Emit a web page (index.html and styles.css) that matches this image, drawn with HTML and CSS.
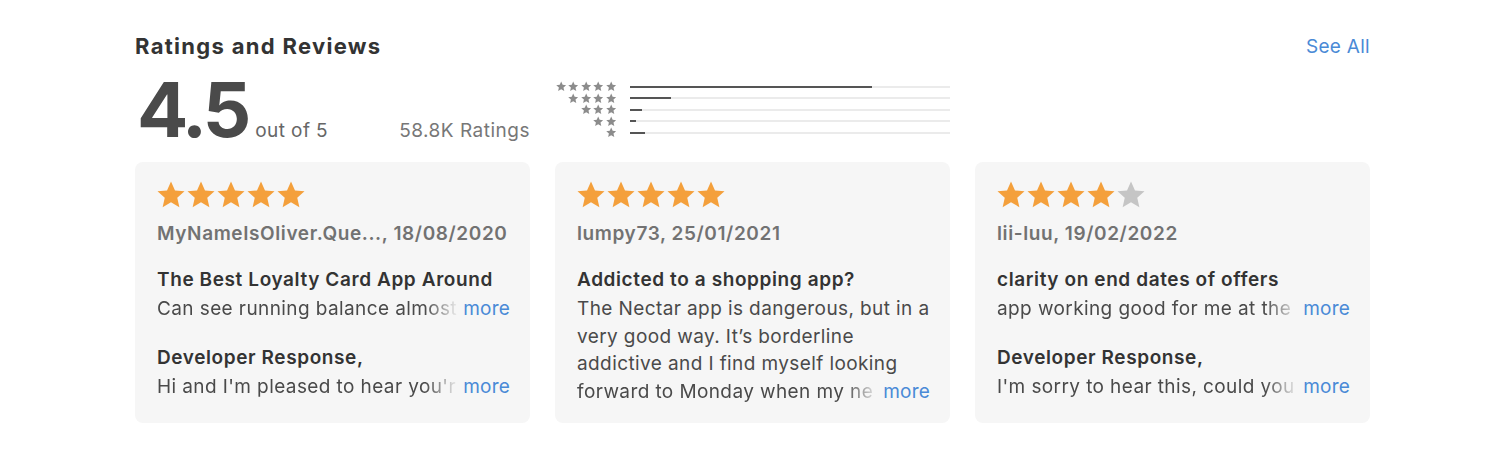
FILE: index.html
```html
<!DOCTYPE html>
<html lang="en">

<head>
    <meta charset="UTF-8">
    <meta name="viewport" content="width=device-width, initial-scale=1.0">
    <title>Ratings and Reviews</title>
    <link rel="stylesheet" href="styles.css">
</head>

<body>
    <svg width="0" height="0" class="defs">
        <symbol id="star" viewBox="0 0 24 24">
            <path d="M12 1.2l3.2 7.1 7.6.7-5.8 5.1 1.7 7.6L12 17.8l-6.7 3.9 1.7-7.6-5.8-5.1 7.6-.7z" />
        </symbol>
    </svg>

    <section class="ratings">
        <div class="section-head">
            <h2>Ratings and Reviews</h2>
            <a href="#" class="see-all">See All</a>
        </div>

        <div class="summary">
            <div class="score-box">
                <span class="big">4.5</span>
                <span class="out-of">out of 5</span>
                <span class="count">58.8K Ratings</span>
            </div>
            <div class="histogram">
                <div class="row">
                    <div class="mini-stars"><svg><use href="#star" /></svg><svg><use href="#star" /></svg><svg><use href="#star" /></svg><svg><use href="#star" /></svg><svg><use href="#star" /></svg></div>
                    <div class="track"><div class="fill" style="width: 75.6%"></div></div>
                </div>
                <div class="row">
                    <div class="mini-stars"><svg><use href="#star" /></svg><svg><use href="#star" /></svg><svg><use href="#star" /></svg><svg><use href="#star" /></svg></div>
                    <div class="track"><div class="fill" style="width: 12.7%"></div></div>
                </div>
                <div class="row">
                    <div class="mini-stars"><svg><use href="#star" /></svg><svg><use href="#star" /></svg><svg><use href="#star" /></svg></div>
                    <div class="track"><div class="fill" style="width: 3.8%"></div></div>
                </div>
                <div class="row">
                    <div class="mini-stars"><svg><use href="#star" /></svg><svg><use href="#star" /></svg></div>
                    <div class="track"><div class="fill" style="width: 1.8%"></div></div>
                </div>
                <div class="row">
                    <div class="mini-stars"><svg><use href="#star" /></svg></div>
                    <div class="track"><div class="fill" style="width: 4.7%"></div></div>
                </div>
            </div>
        </div>

        <div class="cards">
            <div class="card">
                <div class="stars"><svg><use href="#star" /></svg><svg><use href="#star" /></svg><svg><use href="#star" /></svg><svg><use href="#star" /></svg><svg><use href="#star" /></svg></div>
                <div class="author">MyNameIsOliver.Que..., 18/08/2020</div>
                <h3 class="review-title">The Best Loyalty Card App Around</h3>
                <div class="line">
                    <p>Can see running balance almost</p>
                    <a href="#" class="more">more</a>
                </div>
                <h3 class="dev-title">Developer Response,</h3>
                <div class="line">
                    <p>Hi and I'm pleased to hear you'r</p>
                    <a href="#" class="more">more</a>
                </div>
            </div>

            <div class="card">
                <div class="stars"><svg><use href="#star" /></svg><svg><use href="#star" /></svg><svg><use href="#star" /></svg><svg><use href="#star" /></svg><svg><use href="#star" /></svg></div>
                <div class="author">lumpy73, 25/01/2021</div>
                <h3 class="review-title">Addicted to a shopping app?</h3>
                <p class="body">The Nectar app is dangerous, but in a very good way. It’s borderline addictive and I find myself looking</p>
                <div class="line">
                    <p>forward to Monday when my ne</p>
                    <a href="#" class="more">more</a>
                </div>
            </div>

            <div class="card">
                <div class="stars"><svg><use href="#star" /></svg><svg><use href="#star" /></svg><svg><use href="#star" /></svg><svg><use href="#star" /></svg><svg class="off"><use href="#star" /></svg></div>
                <div class="author">lii-luu, 19/02/2022</div>
                <h3 class="review-title">clarity on end dates of offers</h3>
                <div class="line">
                    <p>app working good for me at the</p>
                    <a href="#" class="more">more</a>
                </div>
                <h3 class="dev-title">Developer Response,</h3>
                <div class="line">
                    <p>I'm sorry to hear this, could you</p>
                    <a href="#" class="more">more</a>
                </div>
            </div>
        </div>
    </section>
</body>

</html>
```

FILE: styles.css
```css
body {
    font-family: Inter, "Open Sans", Arial, sans-serif;
    background-color: #fff;
    margin: 0;
    color: #333;
}

.defs {
    position: absolute;
}

.ratings {
    width: 1235px;
    margin-left: 135px;
    padding-top: 32px;
}

.section-head {
    display: flex;
    justify-content: space-between;
    align-items: center;
    height: 28px;
}

.section-head h2 {
    margin: 0;
    font-size: 22px;
    font-weight: 700;
    color: #333;
    letter-spacing: 1.3px;
}

.see-all {
    color: #4a8ad6;
    text-decoration: none;
    font-size: 19px;
    letter-spacing: 0.3px;
}

.summary {
    display: grid;
    grid-template-columns: 395px 395px;
    column-gap: 25px;
    height: 102px;
}

.score-box {
    display: flex;
    align-items: baseline;
    padding-top: 11px;
}

.big {
    font-size: 76px;
    font-weight: 700;
    color: #4a4a4a;
    letter-spacing: -4px;
    line-height: 76px;
    margin-left: 2px;
}

.out-of {
    font-size: 19px;
    color: #666;
    letter-spacing: 0.4px;
    margin-left: 8px;
}

.count {
    margin-left: auto;
    font-size: 19px;
    color: #777;
    letter-spacing: 0.5px;
}

.histogram {
    padding-top: 21px;
}

.histogram .row {
    display: flex;
    align-items: center;
    height: 11.5px;
}

.mini-stars {
    width: 62px;
    display: flex;
    justify-content: flex-end;
}

.mini-stars svg {
    width: 12.4px;
    height: 11px;
    fill: #8c8c8c;
}

.track {
    margin-left: 13px;
    width: 320px;
    height: 2px;
    background: #ebebeb;
}

.fill {
    height: 100%;
    background: #555;
}

.cards {
    display: grid;
    grid-template-columns: repeat(3, 395px);
    column-gap: 25px;
}

.card {
    background: #f6f6f6;
    border-radius: 8px;
    height: 261px;
    box-sizing: border-box;
    padding: 18px 20px 0 22px;
}

.stars {
    display: flex;
    height: 30px;
    margin-left: -1px;
}

.stars svg {
    width: 30px;
    height: 30px;
    fill: #f4a03c;
}

.stars svg.off {
    fill: #c5c5c5;
}

.author {
    margin-top: 10px;
    font-size: 19px;
    line-height: 28px;
    font-weight: 600;
    letter-spacing: 0.6px;
    white-space: nowrap;
    color: #727272;
}

.review-title,
.dev-title {
    margin: 0 0 1px;
    font-size: 19px;
    line-height: 28px;
    font-weight: 600;
    letter-spacing: 0.6px;
    white-space: nowrap;
    color: #333;
}

.review-title {
    margin-top: 18px;
}

.dev-title {
    margin-top: 21px;
}

.body,
.line {
    margin: 0;
    font-size: 19px;
    line-height: 27.7px;
    letter-spacing: 0.4px;
    color: #4a4a4a;
}

.line {
    display: flex;
    gap: 4px;
}

.line p {
    flex: 1;
    min-width: 0;
    margin: 0;
    white-space: nowrap;
    overflow: hidden;
    -webkit-mask-image: linear-gradient(to right, #000 calc(100% - 34px), transparent);
    mask-image: linear-gradient(to right, #000 calc(100% - 34px), transparent);
}

.more {
    color: #4a8ad6;
    text-decoration: none;
    letter-spacing: 0.2px;
}
```
